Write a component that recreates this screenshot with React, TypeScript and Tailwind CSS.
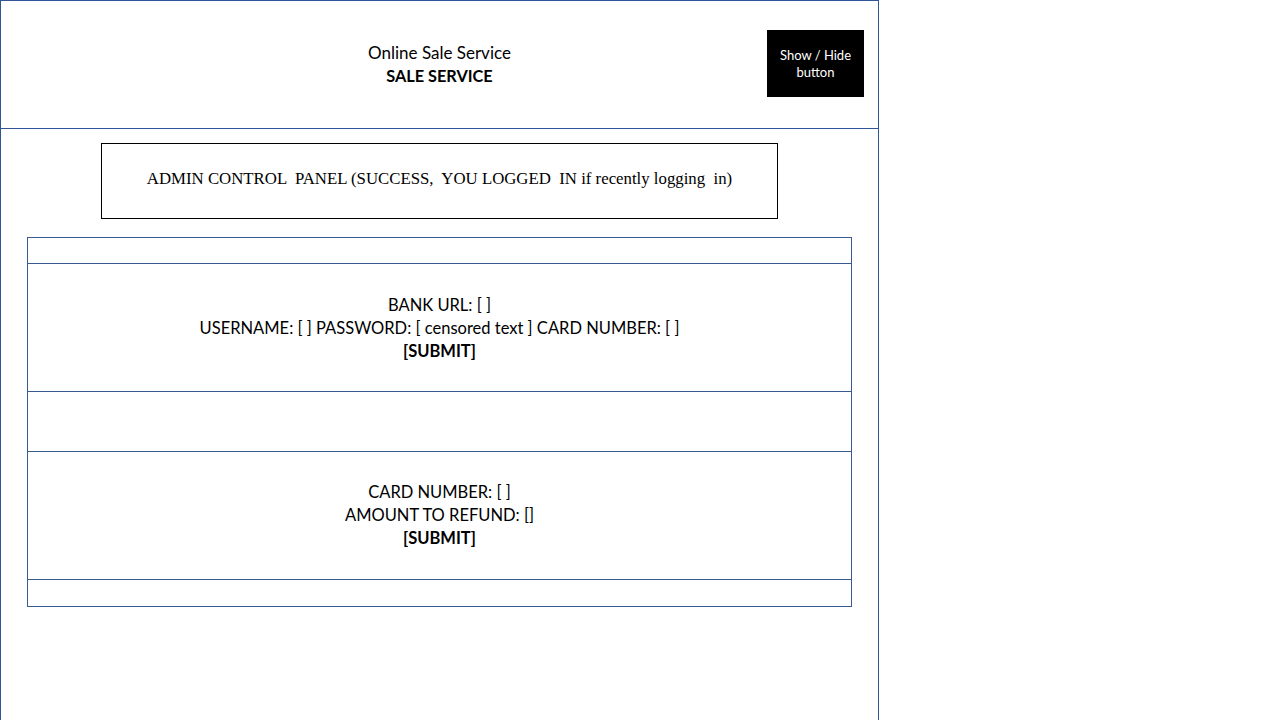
import React from "react";

export default function App() {
  const sans = { fontFamily: "Lato, 'Open Sans', sans-serif" };
  return (
    <div className="w-[1280px] h-[720px] bg-white overflow-hidden">
      <div className="w-[879px] h-[760px] border-l border-t border-r border-[#2f5597] flex flex-col" style={sans}>
        <div className="h-[128px] border-b border-[#2f5597] grid grid-cols-[1fr_auto_1fr] items-center">
          <div />
          <div className="text-center text-black text-[17px] leading-[23px] pb-[1px]">
            <div>Online Sale Service</div>
            <div className="font-bold text-[16.3px]">SALE SERVICE</div>
          </div>
          <div className="flex justify-end pr-[14px] self-start mt-[29px]">
            <div className="w-[97px] h-[67px] bg-black text-white text-[13px] leading-[17px] flex flex-col items-center justify-center text-center">
              <div>Show / Hide</div>
              <div>button</div>
            </div>
          </div>
        </div>
        <div className="flex justify-center mt-[14px]">
          <div
            className="w-[677px] h-[76px] border border-black flex items-center justify-center pb-[5px] text-[16.8px] text-black whitespace-pre"
            style={{ fontFamily: "'Liberation Serif', 'Times New Roman', serif" }}
          >
            ADMIN CONTROL  PANEL (SUCCESS,  YOU LOGGED  IN if recently logging  in)
          </div>
        </div>
        <div className="flex justify-center mt-[18px]">
          <div className="w-[825px] border border-[#3a5a94] flex flex-col divide-y divide-[#3a5a94] text-black text-[16.5px] leading-[22.8px]">
            <div className="h-[26px]" />
            <div className="h-[128px] flex flex-col items-center justify-center text-center pt-[2px]">
              <div>BANK URL: [ ]</div>
              <div>USERNAME: [ ] PASSWORD: [ censored text ] CARD NUMBER: [ ]</div>
              <div className="font-bold">[SUBMIT]</div>
            </div>
            <div className="h-[60px]" />
            <div className="h-[128px] flex flex-col items-center justify-center text-center">
              <div>CARD NUMBER: [ ]</div>
              <div>AMOUNT TO REFUND: []</div>
              <div className="font-bold">[SUBMIT]</div>
            </div>
            <div className="h-[26px]" />
          </div>
        </div>
      </div>
    </div>
  );
}
